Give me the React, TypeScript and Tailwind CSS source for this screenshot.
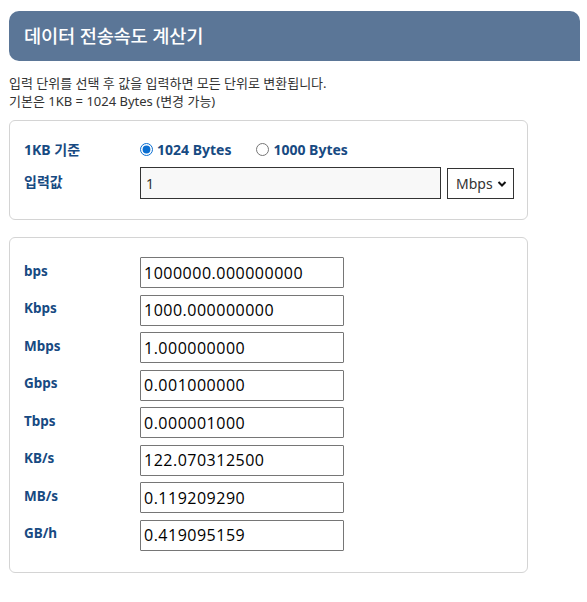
import React, { useState } from "react";

const font = { fontFamily: '"Noto Sans", "Noto Sans CJK KR", sans-serif' };

const rows = [
  { label: "bps", value: "1000000.000000000" },
  { label: "Kbps", value: "1000.000000000" },
  { label: "Mbps", value: "1.000000000" },
  { label: "Gbps", value: "0.001000000" },
  { label: "Tbps", value: "0.000001000" },
  { label: "KB/s", value: "122.070312500" },
  { label: "MB/s", value: "0.119209290" },
  { label: "GB/h", value: "0.419095159" },
];

export default function App() {
  const [base, setBase] = useState("1024");

  return (
    <div
      className="min-h-screen bg-white pl-[9px] pr-[7px] pt-[11px] text-[#333]"
      style={font}
    >
      {/* Title bar */}
      <div className="h-[50px] flex items-center pl-[15px] bg-[#5b7697] rounded-tl-[10px] rounded-tr-[10px] rounded-bl-[10px]">
        <h1 className="text-white text-[18.7px] font-medium tracking-[-0.2px]">
          데이터 전송속도 계산기
        </h1>
      </div>

      <p className="mt-[13px] text-[13px] leading-[18px] text-[#333]">
        입력 단위를 선택 후 값을 입력하면 모든 단위로 변환됩니다.
        <br />
        기본은 1KB = 1024 Bytes (변경 가능)
      </p>

      {/* Settings card */}
      <div className="mt-[10px] w-[519px] border border-[#d4d4d4] rounded-[6px] pl-[14px] pt-[17px] pb-[20px]">
        <div className="flex items-center h-[22px]">
          <div className="w-[116px] text-[14px] font-bold text-[#174a82]">1KB 기준</div>
          <label className="flex items-center gap-[4px] text-[14px] font-bold text-[#174a82] mr-[25px]">
            <input
              type="radio"
              name="base"
              checked={base === "1024"}
              onChange={() => setBase("1024")}
              className="w-[13px] h-[13px] m-0 accent-[#0a6ed1]"
            />
            1024 Bytes
          </label>
          <label className="flex items-center gap-[4px] text-[14px] font-bold text-[#174a82]">
            <input
              type="radio"
              name="base"
              checked={base === "1000"}
              onChange={() => setBase("1000")}
              className="w-[13px] h-[13px] m-0"
            />
            1000 Bytes
          </label>
        </div>
        <div className="flex items-center mt-[7px]">
          <div className="w-[116px] text-[14px] font-bold text-[#174a82] -mt-[4px]">입력값</div>
          <input
            defaultValue="1"
            className="w-[301px] h-[32px] border border-[#333] bg-[#f8f8f8] px-[5px] text-[14px] text-[#333] outline-none"
          />
          <div className="ml-[6px] relative w-[67px] h-[31px] border border-[#333] flex items-center pl-[8px] text-[14px] text-[#333]">
            Mbps
            <svg
              className="absolute right-[6px] top-[11px]"
              width="10"
              height="8"
              viewBox="0 0 10 8"
            >
              <path d="M1.5 2l3.5 3.5L8.5 2" fill="none" stroke="#111" strokeWidth="2" />
            </svg>
          </div>
        </div>
      </div>

      {/* Results card */}
      <div className="mt-[17px] w-[519px] border border-[#d4d4d4] rounded-[6px] pl-[14px] pt-[19px] pb-[21px] flex flex-col gap-[6.5px]">
        {rows.map((r) => (
          <div key={r.label} className="flex items-center">
            <div className="w-[116px] text-[13.5px] font-bold text-[#174a82] -mt-[3px]">
              {r.label}
            </div>
            <input
              readOnly
              value={r.value}
              className="w-[204px] h-[31px] border border-[#767676] rounded-[1px] px-[3px] text-[16px] tracking-[0.5px] text-black outline-none"
              style={{ fontFamily: '"Open Sans", "Noto Sans", sans-serif' }}
            />
          </div>
        ))}
      </div>
    </div>
  );
}
